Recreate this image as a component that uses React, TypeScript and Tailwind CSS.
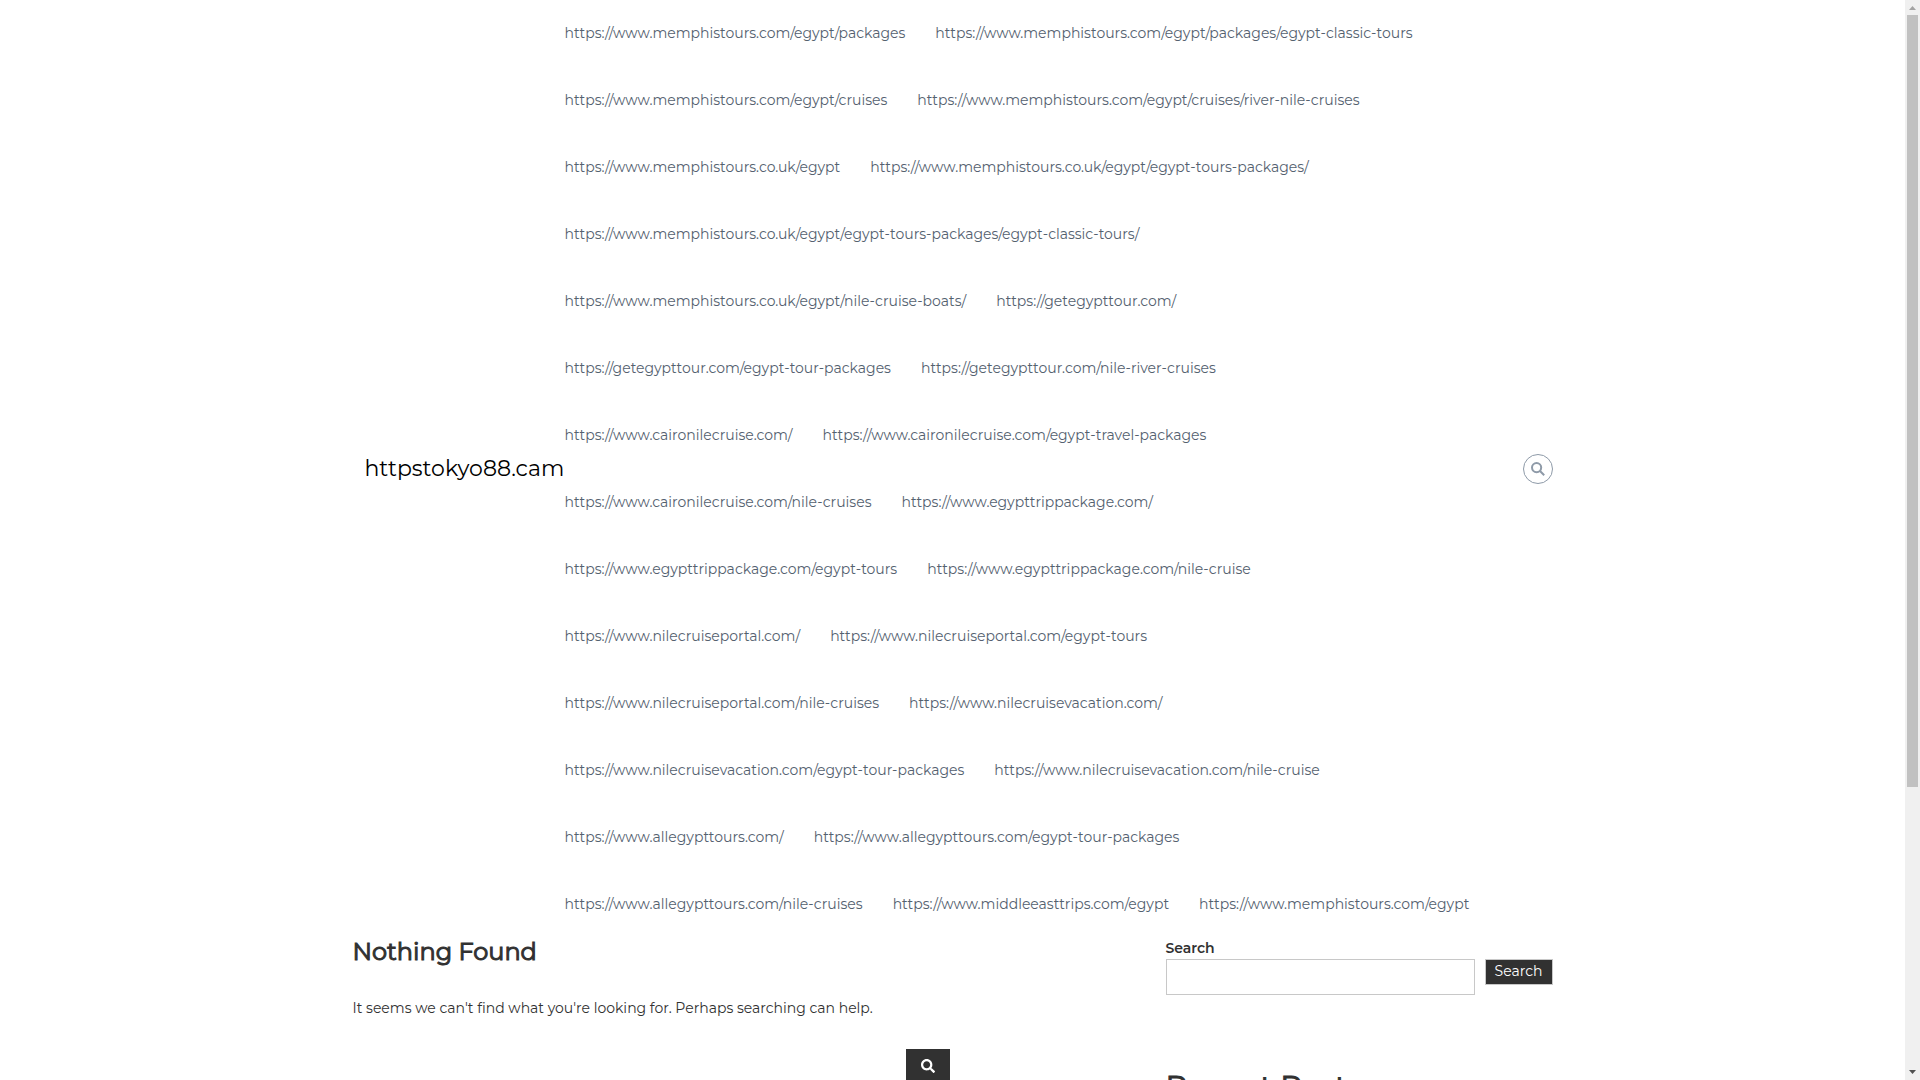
import React from 'react';
import { FaSearch } from 'react-icons/fa';

const menuRows: string[][] = [
  ['https://www.memphistours.com/egypt/packages', 'https://www.memphistours.com/egypt/packages/egypt-classic-tours'],
  ['https://www.memphistours.com/egypt/cruises', 'https://www.memphistours.com/egypt/cruises/river-nile-cruises'],
  ['https://www.memphistours.co.uk/egypt', 'https://www.memphistours.co.uk/egypt/egypt-tours-packages/'],
  ['https://www.memphistours.co.uk/egypt/egypt-tours-packages/egypt-classic-tours/'],
  ['https://www.memphistours.co.uk/egypt/nile-cruise-boats/', 'https://getegypttour.com/'],
  ['https://getegypttour.com/egypt-tour-packages', 'https://getegypttour.com/nile-river-cruises'],
  ['https://www.caironilecruise.com/', 'https://www.caironilecruise.com/egypt-travel-packages'],
  ['https://www.caironilecruise.com/nile-cruises', 'https://www.egypttrippackage.com/'],
  ['https://www.egypttrippackage.com/egypt-tours', 'https://www.egypttrippackage.com/nile-cruise'],
  ['https://www.nilecruiseportal.com/', 'https://www.nilecruiseportal.com/egypt-tours'],
  ['https://www.nilecruiseportal.com/nile-cruises', 'https://www.nilecruisevacation.com/'],
  ['https://www.nilecruisevacation.com/egypt-tour-packages', 'https://www.nilecruisevacation.com/nile-cruise'],
  ['https://www.allegypttours.com/', 'https://www.allegypttours.com/egypt-tour-packages'],
  ['https://www.allegypttours.com/nile-cruises', 'https://www.middleeasttrips.com/egypt', 'https://www.memphistours.com/egypt'],
];

const Header: React.FC = () => (
  <header className="flex items-center">
    <a href="#" className="w-[212px] shrink-0 pl-3 text-[22px] leading-8 whitespace-nowrap text-black">
      httpstokyo88.cam
    </a>
    <nav className="flex-1">
      {menuRows.map((row, index) => (
        <ul key={index} className="flex h-[67px] items-center gap-[30px] pb-px">
          {row.map(url => (
            <li key={url}>
              <a href={url} className="whitespace-nowrap text-[#54616f]">{url}</a>
            </li>
          ))}
        </ul>
      ))}
    </nav>
    <button
      type="button"
      aria-label="Open search"
      className="flex size-[30px] shrink-0 items-center justify-center rounded-full border border-[#8e9aa8] text-[#8e9aa8]"
    >
      <SearchIcon />
    </button>
  </header>
);

const SearchIcon: React.FC = () => (
  <svg viewBox="0 0 14 14" className="size-3.5" fill="none" stroke="currentColor" strokeWidth="2">
    <circle cx="5.6" cy="5.6" r="4.6" />
    <path d="M9 9 13.2 13.2" />
  </svg>
);

const Sidebar: React.FC = () => (
  <aside className="w-[387px] shrink-0">
    <form>
      <label htmlFor="sidebar-search" className="block h-[21px] leading-5 font-semibold">Search</label>
      <div className="flex items-start gap-2.5">
        <input
          id="sidebar-search"
          type="search"
          className="h-9 min-w-0 flex-1 border border-[#c8c8c8] px-2"
        />
        <button
          type="submit"
          className="h-[26px] w-[68px] border border-[#c8c8c8] bg-[#313131] pb-0.5 leading-5 text-white"
        >
          Search
        </button>
      </div>
    </form>
    <h2 className="mt-[70px] text-[30px] leading-11 font-normal [-webkit-text-stroke:1px]">Recent Posts</h2>
  </aside>
);

// Window scrollbar with its arrows and thumb
const Scrollbar: React.FC = () => (
  <div className="flex w-[15px] shrink-0 flex-col items-center bg-[#f0f0f0]">
    <svg viewBox="0 0 15 15" className="size-[15px] shrink-0">
      <path d="M7.5 6 11 10H4z" fill="#a3a3a3" />
    </svg>
    <div className="h-[772px] w-[11px] bg-[#c1c1c1]" />
    <svg viewBox="0 0 15 15" className="mt-auto size-[15px] shrink-0">
      <path d="M4 5h7L7.5 9z" fill="#505050" />
    </svg>
  </div>
);

const App: React.FC = () => (
  <div className="flex h-screen overflow-hidden bg-white font-['Montserrat','Inter',sans-serif] text-sm text-[#313131]">
    <div className="min-w-0 flex-1 overflow-hidden">
      <div className="mx-auto max-w-[1200px]">
        <Header />
        <main className="flex justify-between">
          <section className="w-[597px]">
            <h1 className="text-2xl leading-7 font-normal [-webkit-text-stroke:1px]">Nothing Found</h1>
            <p className="mt-8 leading-5">
              It seems we can't find what you're looking for. Perhaps searching can help.
            </p>
            <form className="mt-[31px] flex">
              <input type="search" aria-label="Search for" className="h-9 min-w-0 flex-1 outline-none" />
              <button
                type="submit"
                aria-label="Submit search"
                className="flex h-9 w-11 items-center justify-center bg-[#313131] pb-0.5 text-white"
              >
                <FaSearch className="size-3.5" />
              </button>
            </form>
          </section>
          <Sidebar />
        </main>
      </div>
    </div>
    <Scrollbar />
  </div>
);

export default App;
